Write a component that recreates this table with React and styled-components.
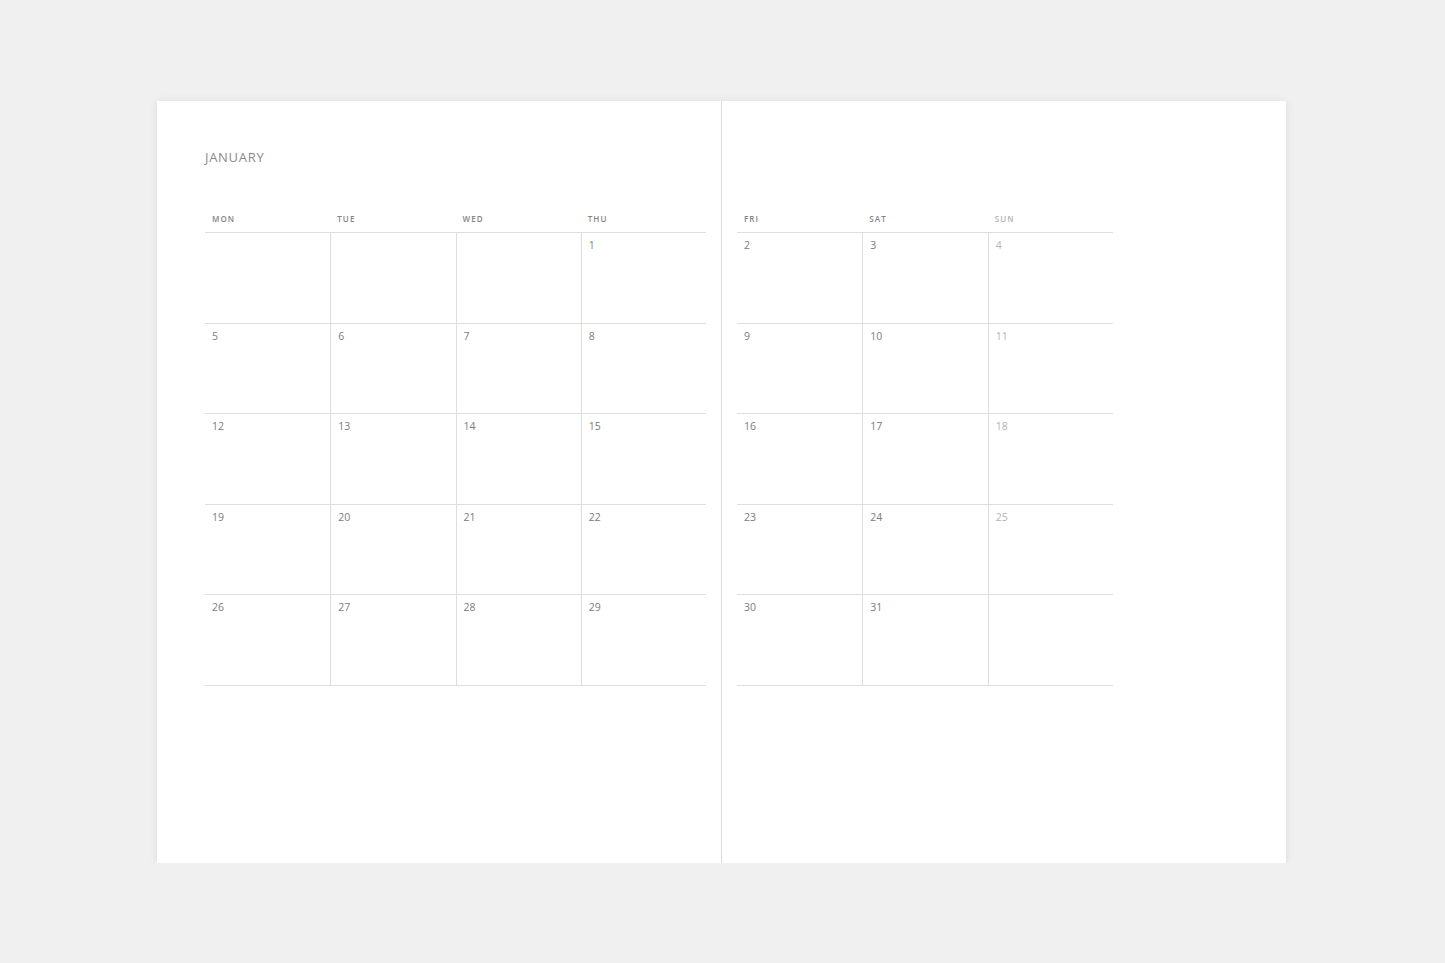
import React from 'react';
import styled, { createGlobalStyle } from 'styled-components';

const GlobalStyle = createGlobalStyle`
    html, body {
        margin: 0;
        padding: 0;
        background: #f0f0f0;
        font-family: "Open Sans", "Liberation Sans", sans-serif;
    }
`;

const Spread = styled.div`
    display: flex;
    width: 1129px;
    height: 762px;
    margin: 101px 0 0 157px;
    background: #fff;
    box-shadow: 0 0 10px rgba(0, 0, 0, 0.06), 0 2px 6px rgba(0, 0, 0, 0.04);
`;

const Page = styled.section`
    box-sizing: border-box;
    flex: 0 0 ${(p) => (p.$right ? '565px' : '564px')};
    display: flex;
    flex-direction: column;
    padding: 48px 0 0 ${(p) => (p.$right ? '15px' : '48px')};
    border-left: ${(p) => (p.$right ? '1px solid #dadada' : 'none')};
`;

const Title = styled.h1`
    margin: 0;
    height: 16px;
    font-size: 13px;
    line-height: 16px;
    font-weight: 400;
    letter-spacing: 0.7px;
    color: #8a8a8a;
`;

const Grid = styled.div`
    display: grid;
    grid-template-columns: repeat(${(p) => p.$cols}, 1fr);
    grid-template-rows: 20px repeat(5, 90.6px);
    width: ${(p) => p.$width}px;
    margin-top: 48px;
`;

const DayHead = styled.div`
    box-sizing: border-box;
    padding: 0 0 0 7px;
    font-size: 8px;
    line-height: 11px;
    letter-spacing: 1.1px;
    font-weight: 600;
    color: ${(p) => (p.$muted ? '#b4b4b4' : '#848484')};
    border-bottom: 1px solid #dedede;
`;

const Cell = styled.div`
    box-sizing: border-box;
    padding: 6px 0 0 7px;
    font-size: 10.5px;
    line-height: 12px;
    color: ${(p) => (p.$muted ? '#b4b4b4' : '#7c7c7c')};
    border-bottom: 1px solid #dedede;
    border-left: ${(p) => (p.$first ? 'none' : '1px solid #dedede')};
`;

const weeks = [
    [null, null, null, 1, 2, 3, 4],
    [5, 6, 7, 8, 9, 10, 11],
    [12, 13, 14, 15, 16, 17, 18],
    [19, 20, 21, 22, 23, 24, 25],
    [26, 27, 28, 29, 30, 31, null]
];

const days = ['MON', 'TUE', 'WED', 'THU', 'FRI', 'SAT', 'SUN'];

const MonthGrid = ({ from, to, width }) => {
    const cols = to - from;
    return (
        <Grid $cols={cols} $width={width}>
            {days.slice(from, to).map((d, i) => (
                <DayHead key={d} $muted={from + i === 6}>
                    {d}
                </DayHead>
            ))}
            {weeks.map((week, w) =>
                week.slice(from, to).map((n, i) => (
                    <Cell key={`${w}-${i}`} $first={i === 0} $muted={from + i === 6}>
                        {n}
                    </Cell>
                ))
            )}
        </Grid>
    );
};

const App = () => (
    <>
        <GlobalStyle />
        <Spread>
            <Page>
                <Title>JANUARY</Title>
                <MonthGrid from={0} to={4} width={501} />
            </Page>
            <Page $right>
                <Title />
                <MonthGrid from={4} to={7} width={376} />
            </Page>
        </Spread>
    </>
);

export default App;
